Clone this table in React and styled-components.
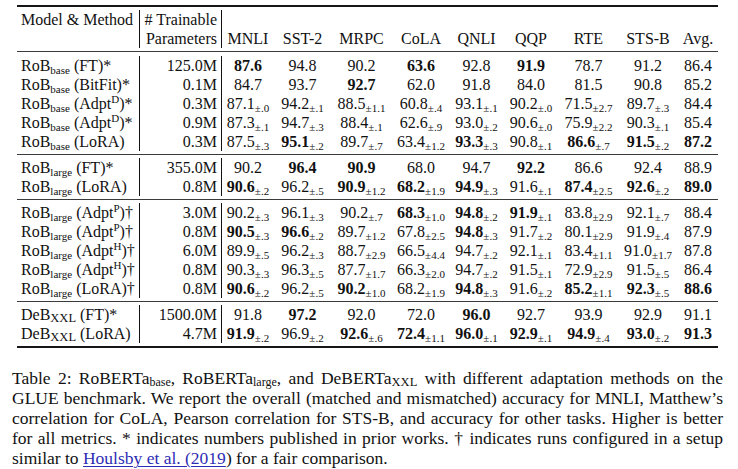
import React from "react";
import styled, { createGlobalStyle } from "styled-components";

const Global = createGlobalStyle`
  html, body { margin: 0; padding: 0; background: #fff; }
  body {
    font-family: "Liberation Serif", "Times New Roman", serif;
    color: #111;
  }
`;

const Page = styled.div`
  width: 738px;
  height: 469px;
  overflow: hidden;
  background: #fff;
  padding-top: 5px;
  box-sizing: border-box;
`;

const Table = styled.div`
  margin-left: 17px;
  width: 701px;
  font-size: 16px;
`;

const Rule = styled.div`
  height: ${(p) => (p.$thick ? 2 : 1)}px;
  background: ${(p) => (p.$thick ? "#161616" : "#3a3a3a")};
  margin: ${(p) => p.$m || "3px 0"};
`;

const Row = styled.div`
  display: grid;
  grid-template-columns: 123px 82px 52px 57px 61px 58px 53px 56px 59px 60px 40px;
  height: ${(p) => (p.$head ? 38 : 19)}px;
  line-height: 19px;
  white-space: nowrap;
  margin-top: ${(p) => (p.$head ? 3 : 0)}px;
`;

const NameCell = styled.div`
  padding-left: 4px;
  border-right: 1px solid #111;
`;

const ParamCell = styled.div`
  text-align: right;
  padding-right: 4px;
  border-right: 1px solid #111;
`;

const HeadCell = styled.div`
  align-self: end;
  text-align: center;
`;

const ValCell = styled.div`
  text-align: center;
`;

const Num = styled.span`
  font-weight: ${(p) => (p.$b ? 700 : 400)};
`;

const Sub = styled.span`
  font-size: ${(p) => p.$size || 11}px;
  vertical-align: ${(p) => p.$drop || -3}px;
  line-height: 0;
`;

const Sup = styled.span`
  font-size: 11px;
  vertical-align: 6px;
  line-height: 0;
`;

const Caption = styled.div`
  margin: 20px 0 0 12px;
  width: 711px;
  font-size: 17.5px;
  line-height: 20px;
`;

const CapLine = styled.div`
  text-align: justify;
  text-align-last: ${(p) => (p.$last ? "left" : "justify")};
  height: 20px;
`;

const Cite = styled.span`
  color: #2d2db4;
  text-decoration: underline;
  text-decoration-thickness: 1px;
  text-underline-offset: 2px;
`;

const groups = [
  [
    ["RoB", "base", "FT", "", "*", "125.0M", ["b87.6", "94.8", "90.2", "b63.6", "92.8", "b91.9", "78.7", "91.2", "86.4"]],
    ["RoB", "base", "BitFit", "", "*", "0.1M", ["84.7", "93.7", "b92.7", "62.0", "91.8", "84.0", "81.5", "90.8", "85.2"]],
    ["RoB", "base", "Adpt", "D", "*", "0.3M", ["87.1:.0", "94.2:.1", "88.5:1.1", "60.8:.4", "93.1:.1", "90.2:.0", "71.5:2.7", "89.7:.3", "84.4"]],
    ["RoB", "base", "Adpt", "D", "*", "0.9M", ["87.3:.1", "94.7:.3", "88.4:.1", "62.6:.9", "93.0:.2", "90.6:.0", "75.9:2.2", "90.3:.1", "85.4"]],
    ["RoB", "base", "LoRA", "", "", "0.3M", ["87.5:.3", "b95.1:.2", "89.7:.7", "63.4:1.2", "b93.3:.3", "90.8:.1", "b86.6:.7", "b91.5:.2", "b87.2"]],
  ],
  [
    ["RoB", "large", "FT", "", "*", "355.0M", ["90.2", "b96.4", "b90.9", "68.0", "94.7", "b92.2", "86.6", "92.4", "88.9"]],
    ["RoB", "large", "LoRA", "", "", "0.8M", ["b90.6:.2", "96.2:.5", "b90.9:1.2", "b68.2:1.9", "b94.9:.3", "91.6:.1", "b87.4:2.5", "b92.6:.2", "b89.0"]],
  ],
  [
    ["RoB", "large", "Adpt", "P", "†", "3.0M", ["90.2:.3", "96.1:.3", "90.2:.7", "b68.3:1.0", "b94.8:.2", "b91.9:.1", "83.8:2.9", "92.1:.7", "88.4"]],
    ["RoB", "large", "Adpt", "P", "†", "0.8M", ["b90.5:.3", "b96.6:.2", "89.7:1.2", "67.8:2.5", "b94.8:.3", "91.7:.2", "80.1:2.9", "91.9:.4", "87.9"]],
    ["RoB", "large", "Adpt", "H", "†", "6.0M", ["89.9:.5", "96.2:.3", "88.7:2.9", "66.5:4.4", "94.7:.2", "92.1:.1", "83.4:1.1", "91.0:1.7", "87.8"]],
    ["RoB", "large", "Adpt", "H", "†", "0.8M", ["90.3:.3", "96.3:.5", "87.7:1.7", "66.3:2.0", "94.7:.2", "91.5:.1", "72.9:2.9", "91.5:.5", "86.4"]],
    ["RoB", "large", "LoRA", "", "†", "0.8M", ["b90.6:.2", "96.2:.5", "b90.2:1.0", "68.2:1.9", "b94.8:.3", "91.6:.2", "b85.2:1.1", "b92.3:.5", "b88.6"]],
  ],
  [
    ["DeB", "XXL", "FT", "", "*", "1500.0M", ["91.8", "b97.2", "92.0", "72.0", "b96.0", "92.7", "93.9", "92.9", "91.1"]],
    ["DeB", "XXL", "LoRA", "", "", "4.7M", ["b91.9:.2", "96.9:.2", "b92.6:.6", "b72.4:1.1", "b96.0:.1", "b92.9:.1", "b94.9:.4", "b93.0:.2", "b91.3"]],
  ],
];

const tasks = ["MNLI", "SST-2", "MRPC", "CoLA", "QNLI", "QQP", "RTE", "STS-B", "Avg."];

function Value({ text }) {
  let s = text;
  const b = s[0] === "b";
  if (b) s = s.slice(1);
  const [v, sd] = s.split(":");
  return (
    <ValCell>
      <Num $b={b}>{v}</Num>
      {sd && <Sub>±{sd}</Sub>}
    </ValCell>
  );
}

function DataRow({ row }) {
  const [base, size, method, sup, mark, params, vals] = row;
  const xxl = size === "XXL";
  return (
    <Row>
      <NameCell>
        {base}
        <Sub $size={xxl ? 12.5 : 11} $drop={xxl ? -2 : -3}>{size}</Sub> ({method}
        {sup && <Sup>{sup}</Sup>}){mark}
      </NameCell>
      <ParamCell>{params}</ParamCell>
      {vals.map((v, i) => (
        <Value key={i} text={v} />
      ))}
    </Row>
  );
}

export default function App() {
  return (
    <Page>
      <Global />
      <Table>
        <Rule $thick $m="0" />
        <Row $head>
          <NameCell>Model &amp; Method</NameCell>
          <ParamCell>
            # Trainable
            <br />
            Parameters
          </ParamCell>
          {tasks.map((t) => (
            <HeadCell key={t}>{t}</HeadCell>
          ))}
        </Row>
        {groups.map((g, gi) => (
          <React.Fragment key={gi}>
            <Rule $m={gi === 0 ? "3px 0 4px" : "3px 0"} />
            {g.map((r, ri) => (
              <DataRow key={ri} row={r} />
            ))}
          </React.Fragment>
        ))}
        <Rule $thick $m="3px 0 0" />
      </Table>
      <Caption>
        <CapLine>
          Table 2: RoBERTa<Sub $size={12} $drop={-2}>base</Sub>, RoBERTa
          <Sub $size={12} $drop={-2}>large</Sub>, and DeBERTa<Sub $size={12.5} $drop={-2}>XXL</Sub> with different
          adaptation methods on the
        </CapLine>
        <CapLine>
          GLUE benchmark. We report the overall (matched and mismatched) accuracy for MNLI, Matthew’s
        </CapLine>
        <CapLine>
          correlation for CoLA, Pearson correlation for STS-B, and accuracy for other tasks. Higher is better
        </CapLine>
        <CapLine>
          for all metrics. * indicates numbers published in prior works. † indicates runs configured in a setup
        </CapLine>
        <CapLine $last>
          similar to <Cite>Houlsby et al. (2019</Cite>) for a fair comparison.
        </CapLine>
      </Caption>
    </Page>
  );
}
